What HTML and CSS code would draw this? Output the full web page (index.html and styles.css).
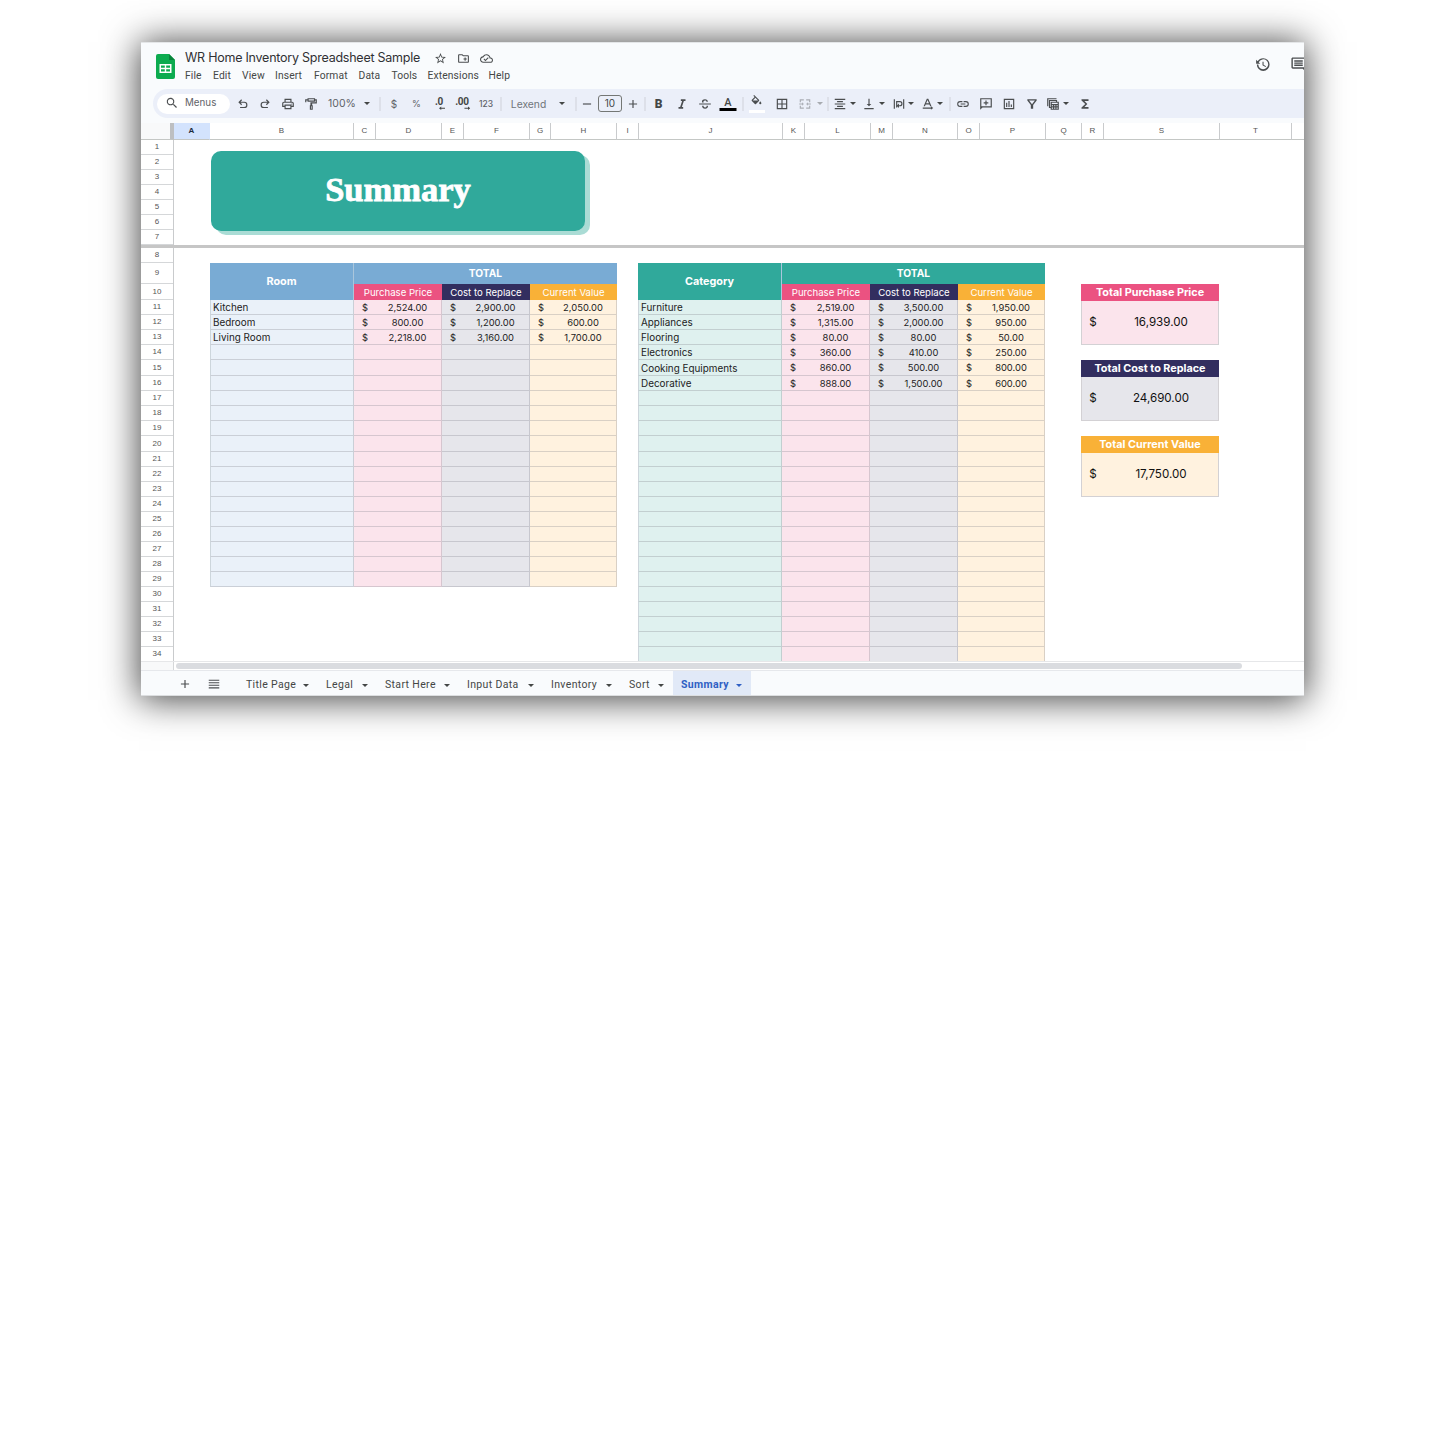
FILE: index.html
```html
<!DOCTYPE html>
<html lang="en">
<head>
<meta charset="utf-8">
<title>WR Home Inventory Spreadsheet Sample</title>
<link rel="stylesheet" href="styles.css">
</head>
<body>
<svg class="defs" aria-hidden="true">
  <symbol id="caret" viewBox="0 0 10 5"><path d="M0 0h10L5 5z"/></symbol>
</svg>
<main class="window">
  <header class="head">
    <svg class="logo" viewBox="0 0 19 25"><path fill="#0cab4f" d="M2 0h11l6 6v17a2 2 0 0 1-2 2H2a2 2 0 0 1-2-2V2a2 2 0 0 1 2-2z"/><path fill="#07843b" d="M13 0l6 6h-6z"/><path fill="#fff" fill-rule="evenodd" d="M3.500 10h12v9h-12zM5 11.400v2.300h3.800v-2.300zM10.200 11.400v2.300H14v-2.300zM5 15.200v2.300h3.800v-2.300zM10.200 15.200v2.300H14v-2.300z"/></svg>
    <div class="names">
      <div class="title-row">
        <h1 class="title">WR Home Inventory Spreadsheet Sample</h1>
        <svg class="ic star" viewBox="0 0 24 24"><path d="M22 9.240l-7.190-.62L12 2 9.190 8.630 2 9.240l5.460 4.730L5.820 21 12 17.270 18.180 21l-1.630-7.030L22 9.240zM12 15.400l-3.760 2.270 1-4.280-3.320-2.880 4.380-.38L12 6.100l1.710 4.040 4.380.38-3.320 2.880 1 4.280L12 15.400z"/></svg>
        <svg class="ic" viewBox="0 0 24 24"><path d="M20 6h-8l-2-2H4c-1.100 0-2 .9-2 2v12c0 1.100.9 2 2 2h16c1.100 0 2-.9 2-2V8c0-1.100-.9-2-2-2zm0 12H4V6h5.170l2 2H20v10zm-8-4h2v2h2v-2h2v-2h-2v-2h-2v2h-2z"/></svg>
        <svg class="ic" viewBox="0 0 24 24"><path d="M19.350 10.040C18.670 6.590 15.640 4 12 4 9.110 4 6.600 5.640 5.350 8.040 2.340 8.360 0 10.910 0 14c0 3.310 2.690 6 6 6h13c2.760 0 5-2.240 5-5 0-2.640-2.050-4.780-4.650-4.960zM19 18H6c-2.210 0-4-1.790-4-4 0-2.050 1.530-3.760 3.560-3.970l1.070-.11.5-.95C8.080 7.140 9.940 6 12 6c2.620 0 4.880 1.860 5.390 4.430l.3 1.500 1.530.11c1.560.1 2.780 1.410 2.780 2.960 0 1.650-1.350 3-3 3zm-9-3.820l-2.090-2.090L6.500 13.500 10 17l6.010-6.010-1.410-1.410z"/></svg>
      </div>
      <nav class="menu"><span>File</span><span>Edit</span><span>View</span><span>Insert</span><span>Format</span><span>Data</span><span>Tools</span><span>Extensions</span><span>Help</span></nav>
    </div>
    <div class="head-actions">
      <svg class="ic history" viewBox="0 0 24 24"><path d="M13 3a9 9 0 0 0-7.800 4.500L3 5.300V11h5.700L6.600 8.900A7 7 0 1 1 6 12H4a9 9 0 1 0 9-9zm-1 5v5l4.280 2.540.72-1.210-3.500-2.080V8z"/></svg>
      <svg class="ic notes" viewBox="0 0 24 24"><path d="M22 4c0-1.100-.9-2-2-2H4c-1.100 0-2 .9-2 2v12c0 1.100.9 2 2 2h14l4 4V4zM20 16H4V4h16v12zM6 12h12v2H6zm0-3h12v2H6zm0-3h12v2H6z"/></svg>
    </div>
  </header>

  <div class="toolbar">
    <div class="search"><svg class="ic" viewBox="0 0 24 24"><path d="M15.500 14h-.79l-.28-.27A6.500 6.500 0 1 0 13.730 14.430l.27.28v.79l5 4.990L20.490 19l-4.990-5zm-6 0a4.500 4.500 0 1 1 0-9 4.500 4.500 0 0 1 0 9z"/></svg><span>Menus</span></div>
    <div class="tools">
      <svg class="ic" viewBox="0 0 24 24"><path d="M7 19v-2h7.100a3.500 3.500 0 0 0 0-7H7.800l2.600 2.600L9 14 4 9l5-5 1.400 1.400L7.800 8h6.300a5.500 5.500 0 0 1 0 11z"/></svg>
      <svg class="ic" viewBox="0 0 24 24"><path d="M17 19v-2H9.900a3.500 3.500 0 0 1 0-7h6.300l-2.600 2.600L15 14l5-5-5-5-1.400 1.400L16.200 8H9.900a5.500 5.500 0 0 0 0 11z"/></svg>
      <svg class="ic" viewBox="0 0 24 24"><path d="M19 8h-1V3H6v5H5c-1.660 0-3 1.340-3 3v6h4v4h12v-4h4v-6c0-1.660-1.340-3-3-3zM8 5h8v3H8V5zm8 14H8v-4h8v4zm4-4h-2v-2H6v2H4v-4c0-.55.45-1 1-1h14c.55 0 1 .45 1 1v4zm-3-3.500h2v1h-2z"/></svg>
      <svg class="ic" viewBox="0 0 24 24"><path fill-rule="evenodd" d="M6 2h13v2h3v7h-8v3h1v8h-5v-8h1V9h9V6h-1v2H6V6H4v3H2V4h4zm2 2v2h9V4zm4 12v4h1v-4z"/></svg>
      <span class="zoom">100%</span>
      <svg class="caret"><use href="#caret"/></svg>
      <i class="sep"></i>
      <span class="sym">$</span>
      <span class="sym pct">%</span>
      <span class="dec">.0<svg viewBox="0 0 8 5"><path d="M8 2H3V.5L0 2.700 3 5V3.500h5z"/></svg></span>
      <span class="dec">.00<svg viewBox="0 0 8 5"><path d="M0 2h5V.5L8 2.700 5 5V3.500H0z"/></svg></span>
      <span class="num">123</span>
      <i class="sep"></i>
      <span class="font">Lexend</span>
      <svg class="caret"><use href="#caret"/></svg>
      <i class="sep"></i>
      <svg class="ic" viewBox="0 0 24 24"><path d="M5 11h14v2H5z"/></svg>
      <span class="size">10</span>
      <svg class="ic" viewBox="0 0 24 24"><path d="M19 13h-6v6h-2v-6H5v-2h6V5h2v6h6z"/></svg>
      <i class="sep"></i>
      <b class="bold">B</b>
      <svg class="ic" viewBox="0 0 24 24"><path d="M10 4v3h2.210l-3.420 10H6v3h8v-3h-2.210l3.420-10H18V4z"/></svg>
      <svg class="ic" viewBox="0 0 24 24"><path d="M2 11h20v2H2zM7 9.500C6 6 8.500 4 12 4c3 0 5 1.500 5 4.300h-2.500C14.500 7 13.500 6.200 12 6.200c-2 0-3 1.200-2.400 3.300zM7 15h2.500c0 1.800 1 2.800 2.700 2.800 2 0 3-1.300 2.400-2.800H17c.8 3-1.500 5-4.800 5C9 20 7 18.200 7 15z"/></svg>
      <span class="ink">A</span>
      <i class="sep"></i>
      <span class="fill"><svg class="ic" viewBox="0 0 24 24"><path d="M16.560 8.940L7.620 0 6.210 1.410l2.380 2.380-5.150 5.150a1.490 1.490 0 0 0 0 2.120l5.500 5.500c.29.29.68.44 1.060.44s.77-.15 1.060-.44l5.500-5.500c.59-.58.59-1.530 0-2.120zM5.210 10L10 5.210 14.790 10zM19 11.500s-2 2.170-2 3.500a2 2 0 1 0 4 0c0-1.330-2-3.500-2-3.500z"/></svg></span>
      <svg class="ic" viewBox="0 0 24 24"><path fill-rule="evenodd" d="M3 3h18v18H3zm2 2v6h6V5zm8 0v6h6V5zm-8 8v6h6v-6zm8 0v6h6v-6z"/></svg>
      <svg class="ic dim" viewBox="0 0 24 24"><path d="M3 4h7v2H5v3H3zm11 0h7v5h-2V6h-5zM3 15h2v3h5v2H3zm16 0h2v5h-7v-2h5zM2 11h5V9l3 3-3 3v-2H2zm20 0h-5V9l-3 3 3 3v-2h5z"/></svg>
      <svg class="caret dim"><use href="#caret"/></svg>
      <i class="sep"></i>
      <svg class="ic" viewBox="0 0 24 24"><path d="M3 3h18v2H3zm4 4h10v2H7zm-4 4h18v2H3zm4 4h10v2H7zm-4 4h18v2H3z"/></svg>
      <svg class="caret"><use href="#caret"/></svg>
      <svg class="ic" viewBox="0 0 24 24"><path d="M16 12h-3V3h-2v9H8l4 4zM4 19v2h16v-2z"/></svg>
      <svg class="caret"><use href="#caret"/></svg>
      <svg class="ic" viewBox="0 0 24 24"><path d="M3 4h2v16H3zm16 0h2v16h-2zM7 7h6.500a4.500 4.500 0 0 1 0 9H12v3l-4-4 4-4v3h1.500a2.500 2.500 0 0 0 0-5H9v9H7z"/></svg>
      <svg class="caret"><use href="#caret"/></svg>
      <svg class="ic" viewBox="0 0 24 24"><path fill-rule="evenodd" d="M10 3h2.500L18 16h-2.300l-1.300-3.300H8L6.700 16H4.500zM8.800 10.800h4.900L11.200 5zM3 18h14v-2l4 3-4 3v-2H3z"/></svg>
      <svg class="caret"><use href="#caret"/></svg>
      <i class="sep"></i>
      <svg class="ic" viewBox="0 0 24 24"><path d="M3.900 12c0-1.710 1.390-3.100 3.100-3.100h4V7H7a5 5 0 0 0 0 10h4v-1.900H7c-1.710 0-3.100-1.390-3.100-3.100zM8 13h8v-2H8zm9-6h-4v1.900h4a3.100 3.100 0 0 1 0 6.200h-4V17h4a5 5 0 0 0 0-10z"/></svg>
      <svg class="ic" viewBox="0 0 24 24"><path fill-rule="evenodd" d="M2 2h20v16H6l-4 4zm2 2v12h16V4zm7 2h2v3h3v2h-3v3h-2v-3H8V9h3z"/></svg>
      <svg class="ic" viewBox="0 0 24 24"><path fill-rule="evenodd" d="M3 3h18v18H3zm2 2v14h14V5zm2 5h2v7H7zm4-3h2v10h-2zm4 6h2v4h-2z"/></svg>
      <svg class="ic" viewBox="0 0 24 24"><path fill-rule="evenodd" d="M4 4h16v2l-6 7.500V20h-4v-6.500L4 6zm3 2l5 6.300L17 6z"/></svg>
      <svg class="ic" viewBox="0 0 24 24"><path fill-rule="evenodd" d="M2 2h16v2H4v12H2zm3 3h14v3h3v14H8v-3H5zm2 2v10h1V8h9V7zm3 3v2h10v-2zm0 4v2h2v-2zm4 0v2h2v-2zm4 0v2h2v-2zm-8 4v2h2v-2zm4 0v2h2v-2zm4 0v2h2v-2z"/></svg>
      <svg class="caret"><use href="#caret"/></svg>
      <svg class="ic" viewBox="0 0 24 24"><path d="M18 4H6v2l6.500 6L6 18v2h12v-3h-7l5-5-5-5h7z"/></svg>
    </div>
  </div>

  <div class="cols"><span class="corner"></span><span class="on">A</span><span>B</span><span>C</span><span>D</span><span>E</span><span>F</span><span>G</span><span>H</span><span>I</span><span>J</span><span>K</span><span>L</span><span>M</span><span>N</span><span>O</span><span>P</span><span>Q</span><span>R</span><span>S</span><span>T</span><span></span></div>

  <section class="frozen">
    <div class="rows"><span>1</span><span>2</span><span>3</span><span>4</span><span>5</span><span>6</span><span>7</span></div>
    <div class="banner">Summary</div>
  </section>

  <section class="sheet">
    <div class="rows"><span>8</span><span class="h21">9</span><span class="h16">10</span><span>11</span><span>12</span><span>13</span><span>14</span><span class="h16">15</span><span>16</span><span>17</span><span>18</span><span>19</span><span class="h16">20</span><span>21</span><span>22</span><span>23</span><span>24</span><span>25</span><span>26</span><span>27</span><span>28</span><span>29</span><span>30</span><span>31</span><span>32</span><span>33</span><span>34</span></div>

    <div class="table room">
      <div class="thead"><div class="key">Room</div><div class="total">TOTAL</div><div class="pink-h">Purchase Price</div><div class="navy-h">Cost to Replace</div><div class="gold-h">Current Value</div></div>
      <div class="tr"><span>Kitchen</span><span><i>$</i>2,524.00</span><span><i>$</i>2,900.00</span><span><i>$</i>2,050.00</span></div>
      <div class="tr"><span>Bedroom</span><span><i>$</i>800.00</span><span><i>$</i>1,200.00</span><span><i>$</i>600.00</span></div>
      <div class="tr"><span>Living Room</span><span><i>$</i>2,218.00</span><span><i>$</i>3,160.00</span><span><i>$</i>1,700.00</span></div>
      <div class="tr"><span></span><span></span><span></span><span></span></div>
      <div class="tr h16"><span></span><span></span><span></span><span></span></div>
      <div class="tr"><span></span><span></span><span></span><span></span></div>
      <div class="tr"><span></span><span></span><span></span><span></span></div>
      <div class="tr"><span></span><span></span><span></span><span></span></div>
      <div class="tr"><span></span><span></span><span></span><span></span></div>
      <div class="tr h16"><span></span><span></span><span></span><span></span></div>
      <div class="tr"><span></span><span></span><span></span><span></span></div>
      <div class="tr"><span></span><span></span><span></span><span></span></div>
      <div class="tr"><span></span><span></span><span></span><span></span></div>
      <div class="tr"><span></span><span></span><span></span><span></span></div>
      <div class="tr"><span></span><span></span><span></span><span></span></div>
      <div class="tr"><span></span><span></span><span></span><span></span></div>
      <div class="tr"><span></span><span></span><span></span><span></span></div>
      <div class="tr"><span></span><span></span><span></span><span></span></div>
      <div class="tr"><span></span><span></span><span></span><span></span></div>
    </div>

    <div class="table category">
      <div class="thead"><div class="key">Category</div><div class="total">TOTAL</div><div class="pink-h">Purchase Price</div><div class="navy-h">Cost to Replace</div><div class="gold-h">Current Value</div></div>
      <div class="tr"><span>Furniture</span><span><i>$</i>2,519.00</span><span><i>$</i>3,500.00</span><span><i>$</i>1,950.00</span></div>
      <div class="tr"><span>Appliances</span><span><i>$</i>1,315.00</span><span><i>$</i>2,000.00</span><span><i>$</i>950.00</span></div>
      <div class="tr"><span>Flooring</span><span><i>$</i>80.00</span><span><i>$</i>80.00</span><span><i>$</i>50.00</span></div>
      <div class="tr"><span>Electronics</span><span><i>$</i>360.00</span><span><i>$</i>410.00</span><span><i>$</i>250.00</span></div>
      <div class="tr h16"><span>Cooking Equipments</span><span><i>$</i>860.00</span><span><i>$</i>500.00</span><span><i>$</i>800.00</span></div>
      <div class="tr"><span>Decorative</span><span><i>$</i>888.00</span><span><i>$</i>1,500.00</span><span><i>$</i>600.00</span></div>
      <div class="tr"><span></span><span></span><span></span><span></span></div>
      <div class="tr"><span></span><span></span><span></span><span></span></div>
      <div class="tr"><span></span><span></span><span></span><span></span></div>
      <div class="tr h16"><span></span><span></span><span></span><span></span></div>
      <div class="tr"><span></span><span></span><span></span><span></span></div>
      <div class="tr"><span></span><span></span><span></span><span></span></div>
      <div class="tr"><span></span><span></span><span></span><span></span></div>
      <div class="tr"><span></span><span></span><span></span><span></span></div>
      <div class="tr"><span></span><span></span><span></span><span></span></div>
      <div class="tr"><span></span><span></span><span></span><span></span></div>
      <div class="tr"><span></span><span></span><span></span><span></span></div>
      <div class="tr"><span></span><span></span><span></span><span></span></div>
      <div class="tr"><span></span><span></span><span></span><span></span></div>
      <div class="tr"><span></span><span></span><span></span><span></span></div>
      <div class="tr"><span></span><span></span><span></span><span></span></div>
      <div class="tr"><span></span><span></span><span></span><span></span></div>
      <div class="tr"><span></span><span></span><span></span><span></span></div>
      <div class="tr"><span></span><span></span><span></span><span></span></div>
    </div>

    <aside class="cards">
      <div class="card"><h2 class="pink-h">Total Purchase Price</h2><p class="pink"><i>$</i>16,939.00</p></div>
      <div class="card"><h2 class="navy-h">Total Cost to Replace</h2><p class="gray"><i>$</i>24,690.00</p></div>
      <div class="card"><h2 class="gold-h">Total Current Value</h2><p class="cream"><i>$</i>17,750.00</p></div>
    </aside>
  </section>

  <div class="scroll"><span class="stub"></span><span class="thumb"></span></div>

  <footer class="tabs">
    <svg class="ic add" viewBox="0 0 24 24"><path d="M19 13h-6v6h-2v-6H5v-2h6V5h2v6h6z"/></svg>
    <svg class="ic all" viewBox="0 0 24 24"><path d="M3 4.500h18v2H3zm0 4.300h18v2H3zm0 4.400h18v2H3zm0 4.300h18v2H3z"/></svg>
    <div class="tab-list">
      <div class="tab">Title Page<svg class="caret"><use href="#caret"/></svg></div>
      <div class="tab">Legal<svg class="caret"><use href="#caret"/></svg></div>
      <div class="tab">Start Here<svg class="caret"><use href="#caret"/></svg></div>
      <div class="tab">Input Data<svg class="caret"><use href="#caret"/></svg></div>
      <div class="tab">Inventory<svg class="caret"><use href="#caret"/></svg></div>
      <div class="tab">Sort<svg class="caret"><use href="#caret"/></svg></div>
      <div class="tab active">Summary<svg class="caret"><use href="#caret"/></svg></div>
    </div>
  </footer>
</main>
</body>
</html>
```
FILE: styles.css
```css
* { box-sizing: border-box; }
body { margin: 0; background: #fff; font-family: Inter, "Liberation Sans", sans-serif; color: #444746; overflow: hidden; height: 1445px; }
i { font-style: normal; }
.defs { display: none; }
.window {
  width: 1163px; height: 654px; margin: 42px 0 0 141px;
  display: flex; flex-direction: column; overflow: hidden;
  background: #fff; box-shadow: 0 2px 34px 2px rgba(0, 0, 0, .73);
}
.ic { width: 14px; height: 14px; fill: #4b4e50; flex: none; display: block; }
.caret { width: 6px; height: 3px; fill: #444746; flex: none; display: block; }
.dim { opacity: .4; }

/* title and menus */
.head { height: 47px; flex: none; display: flex; background: #f9fbfd; border-top: 1px solid #e4e6e8; overflow: hidden; }
.logo { width: 19px; height: 25px; margin: 11px 0 0 15px; flex: none; }
.names { margin-left: 10px; padding-top: 7px; }
.title-row { display: flex; align-items: center; height: 16px; }
.title { margin: 0; width: 249px; font-size: 12.500px; line-height: 14px; font-weight: 400; letter-spacing: -.24px; color: #303134; white-space: nowrap; }
.title-row .ic { width: 13px; height: 13px; margin-right: 10px; }
.menu { display: grid; grid-template-columns: 28px 29px 33px 39px 44.500px 33px 36px 61px 24px; margin-top: 3px; font: 10.300px/14px Roboto, sans-serif; letter-spacing: .12px; white-space: nowrap; }
.head-actions { margin-left: auto; display: flex; gap: 19px; padding-top: 13px; }
.history { width: 17px; height: 17px; }
.notes { width: 17px; height: 17px; margin-right: -3px; }

/* toolbar */
.toolbar { height: 29px; flex: none; display: flex; align-items: center; padding-left: 16px; background: linear-gradient(90deg, #f9fbfd 12px, transparent 12px), #ebeff9; position: relative; z-index: 0; }
.toolbar::before { content: ""; position: absolute; z-index: -1; inset: 0 auto 0 12px; width: 40px; background: radial-gradient(circle at 14.500px 50%, #ebeff9 14px, #f9fbfd 15px) 0 0 / 14.500px 100% no-repeat; }
.search { width: 73px; height: 20px; margin-right: 13px; border-radius: 10px; background: #fff; display: flex; align-items: center; gap: 6px; padding-left: 8px; font-size: 9.800px; line-height: 18px; padding-bottom: 1px; color: #5f6368; }
.search .ic { width: 14px; height: 14px; }
.tools {
  display: grid; align-items: center; height: 29px; flex: none; white-space: nowrap;
  grid-template-columns: 22px 23px 22.500px 31.500px 25px 13px 14px 22.500px 22.500px 23px 24px 15px 27.500px 33.500px 14px 11px 23px 23px 12px 13.500px 23.500px 22.500px 23.500px 14.500px 14.500px 24.500px 23.500px 15px 7.500px 12.500px 12.500px 16.500px 13px 17px 12px 17px 12px 9.500px 13.500px 23px 23px 23px 21px 13px 19px 0;
}
.tools > * { justify-self: start; transform: translateX(-50%); }
.sep { width: 1px; height: 14px; background: #cfd2da; }
.zoom { font-size: 10.500px; color: #5f6368; }
.sym { font-size: 10px; color: #5f6368; }
.pct { font-size: 9px; }
.num { font-size: 8.500px; font-weight: 500; color: #5f6368; }
.font { font-size: 10.300px; color: #70757a; }
.dec { font: 700 10px/10px Roboto, sans-serif; letter-spacing: -.3px; display: flex; flex-direction: column; align-items: flex-end; height: 14px; }
.dec svg { width: 6px; height: 4px; fill: #444746; margin-right: -2px; margin-top: -1px; flex: none; }
.size { width: 24px; height: 17px; border: 1px solid #747775; border-radius: 3px; font-size: 10px; line-height: 15px; text-align: center; }
.bold { font: 900 12px/14px Roboto, sans-serif; }
.ink { width: 17px; height: 13px; margin-top: 1px; border-bottom: 3px solid #000; font: 500 11px/9px Roboto, sans-serif; text-align: center; }
.fill { width: 16px; height: 19px; border-bottom: 3px solid #fff; padding: 1px 0 0 1px; }
.fill .ic { width: 13px; height: 13px; }

/* column letters */
.cols {
  height: 22px; flex: none; padding-top: 5px; background: linear-gradient(#f9fbfd 5px, #fff 5px); display: grid;
  grid-template-columns: 33px 36px 144px 22px 66px 22px 66px 21px 66px 22px 144px 22px 66px 22px 65px 22px 66px 36px 22px 116px 72px 12px;
  font: 8px/16px "Liberation Sans", sans-serif; color: #555; text-align: center;
}
.cols span { border-right: 1px solid #c9cbcd; border-bottom: 1px solid #c4c7c5; height: 17px; }
.cols .corner { background: #f8f9fa; border-right: 4px solid #bdbfc1; }
.cols .on { background: #d3e3fd; color: #1f2b3e; font-weight: 700; border-right-color: #d3e3fd; }
.cols span:last-child { border-right: 0; }

/* row numbers */
.rows { width: 33px; flex: none; border-right: 1px solid #c9cbcd; font: 8px/14px "Liberation Sans", sans-serif; color: #555; text-align: center; }
.rows span { display: block; height: 15px; border-bottom: 1px solid #d5d7d9; }
.rows .h21 { height: 21px; line-height: 20px; }
.rows .h16 { height: 16px; line-height: 15px; }

.frozen { height: 108px; flex: none; display: flex; border-bottom: 3px solid #c6c6c6; }
.banner { width: 374px; height: 80px; margin: 11px 0 0 37px; border-radius: 10px; background: #30a99b; box-shadow: 5px 4px 0 #aadcd5; color: #fff; font: 700 34.500px/77px "Liberation Serif", serif; text-align: center; -webkit-text-stroke: .8px #fff; }

/* sheet body */
.sheet { height: 413px; flex: none; display: flex; overflow: hidden; font-size: 9.900px; color: #222; }
.table { width: 407px; flex: none; margin-top: 15px; }
.room { margin-left: 36px; --key: #79abd4; --tint: #eaf1f9; }
.category { margin-left: 21px; --key: #30a99b; --tint: #dff1ef; }
.thead { display: grid; grid-template: 21px 16px / 144px 88px 88px 87px; color: #fff; text-align: center; font-size: 9.600px; line-height: 17px; white-space: nowrap; }
.key { grid-row: 1 / 3; background: var(--key); border-right: 1px solid #aac6dc; font-weight: 700; font-size: 10.800px; line-height: 37px; }
.total { grid-column: 2 / 5; background: var(--key); font-weight: 700; font-size: 10.200px; line-height: 21px; }
.pink-h { background: #eb5281; }
.navy-h { background: #322e5f; }
.gold-h { background: #f9b137; }
.tr { display: grid; grid-template: 15px / 144px 88px 88px 87px; height: 15px; line-height: 15px; }
.tr.h16 { grid-template-rows: 16px; height: 16px; line-height: 16px; }
.tr span { border-right: 1px solid rgba(130, 130, 140, .3); border-bottom: 1px solid rgba(130, 130, 140, .3); display: grid; grid-template: 100% / 20px 1fr; text-align: center; white-space: nowrap; font-size: 9.400px; min-height: 0; }
.tr span:first-child { display: block; text-align: left; padding-left: 2px; font-size: 9.900px; background: var(--tint); border-left: 1px solid #cdd6dc; }
.tr i { padding-left: 2px; }
.tr span:nth-child(2), .pink { background: #fbe4ec; }
.tr span:nth-child(3), .gray { background: #e6e6eb; }
.tr span:nth-child(4), .cream { background: #fff2df; }

.cards { width: 138px; margin: 36px 0 0 36px; display: flex; flex-direction: column; gap: 15px; flex: none; }
.card { height: 61px; color: #111; }
.card h2 { margin: 0; height: 17px; line-height: 17px; font-size: 10.800px; font-weight: 700; color: #fff; text-align: center; white-space: nowrap; }
.card p { margin: 0; height: 44px; border: 1px solid #d3d1d4; border-top: 0; display: grid; grid-template-columns: 22px 1fr; line-height: 43px; font-size: 11.600px; text-align: center; }

.scroll { height: 9px; flex: none; display: flex; border-top: 1px solid #e6e7e9; }
.stub { width: 33px; background: #f8f9fa; border-right: 1px solid #d5d7d9; }
.thumb { width: 1066px; height: 6px; margin: 1px 0 0 2px; border-radius: 3px; background: #dadce0; }

.tabs { flex: 1; display: flex; align-items: stretch; background: #f9fbfd; border-top: 1px solid #e6e8ec; border-bottom: 1px solid #dcdee0; }
.tabs .ic { align-self: center; margin-top: 2px; }
.add { margin-left: 37px; }
.all { margin-left: 15px; }
.tab-list { margin-left: 17px; display: grid; grid-template-columns: 80px 59px 82px 84px 78px 52px 78px; font: 400 10.500px/28px Roboto, sans-serif; letter-spacing: .35px; }
.tab { display: flex; justify-content: space-between; padding: 0 9px 0 8px; white-space: nowrap; height: 24px; }
.tab .caret { margin-top: 13px; }
.active { background: #e1e9f7; color: #2f5fc4; font-weight: 700; }
.active .caret { fill: #2f5fc4; }
```
